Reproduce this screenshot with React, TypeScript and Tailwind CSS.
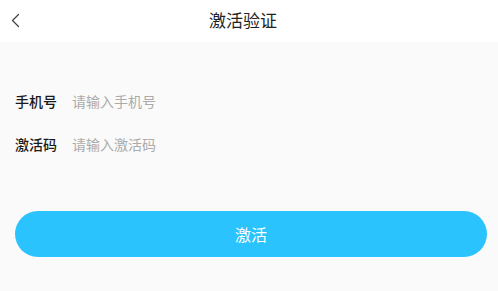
import React from "react";

export default function App() {
  const font = { fontFamily: '"Noto Sans CJK SC", "Noto Sans", sans-serif' };
  return (
    <div className="w-[498px] h-[291px] bg-[#fafafa] flex flex-col" style={font}>
      <div className="h-[42px] bg-white flex items-center relative">
        <svg className="absolute left-[10px] top-[13px]" width="11" height="15" viewBox="0 0 11 15" fill="none">
          <path d="M8.5 1.5 L2.5 7.5 L8.5 13.5" stroke="#444" strokeWidth="1.3" strokeLinecap="round" strokeLinejoin="round" />
        </svg>
        <div className="flex-1 text-center text-[17px] leading-none text-[#222] -mt-[3px] pr-[12px]">激活验证</div>
      </div>
      <div className="pt-[38px] flex flex-col">
        <div className="h-[43px] flex items-center px-[15px] text-[14px]">
          <span className="text-[#1a1a1a] font-medium w-[57px]">手机号</span>
          <input className="flex-1 outline-none bg-transparent placeholder:text-[#ababab] text-[14px]" placeholder="请输入手机号" />
        </div>
        <div className="h-[43px] flex items-center px-[15px] text-[14px]">
          <span className="text-[#1a1a1a] font-medium w-[57px]">激活码</span>
          <input className="flex-1 outline-none bg-transparent placeholder:text-[#ababab] text-[14px]" placeholder="请输入激活码" />
        </div>
      </div>
      <div className="ml-[15px] mr-[11px] mt-[45px]">
        <button className="w-full h-[46px] rounded-full bg-[#2bc3fd] text-white text-[16px]">激活</button>
      </div>
    </div>
  );
}
